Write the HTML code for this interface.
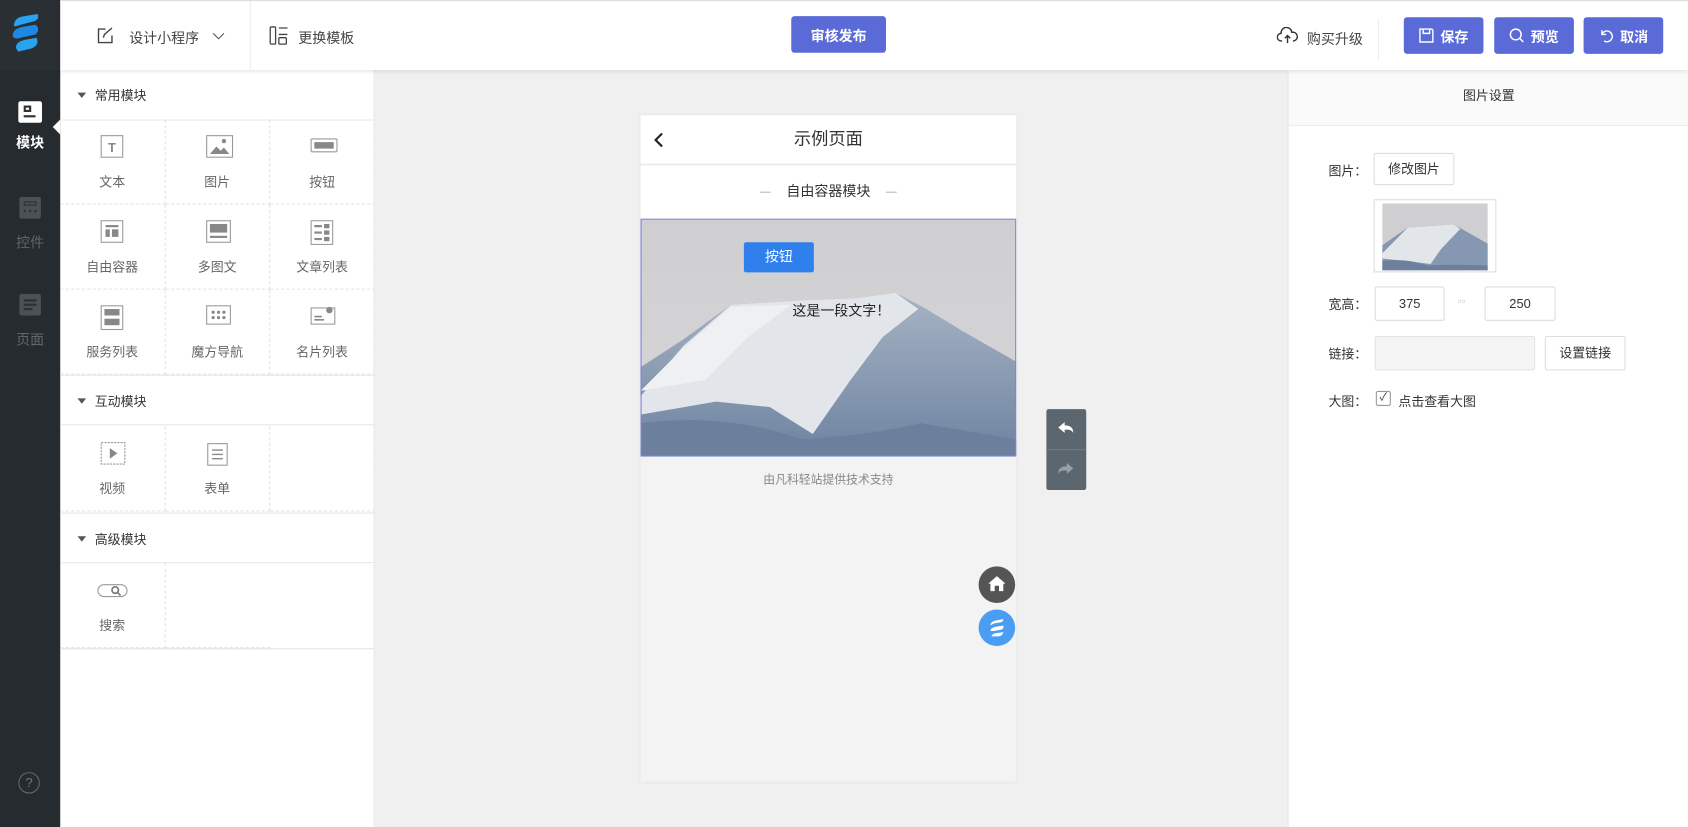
<!DOCTYPE html>
<html><head><meta charset="utf-8"><style>
*{margin:0;padding:0;box-sizing:border-box}
html,body{width:1688px;height:827px;overflow:hidden;background:#fff}
body{font-family:"Liberation Sans","Noto Sans CJK SC",sans-serif;font-size:12px;color:#333}
#w{position:absolute;left:0;top:0;width:1568px;height:768px;transform:scale(1.07653,1.0768);transform-origin:0 0}
.a{position:absolute}
.side{left:0;top:0;width:56px;height:768px;background:#2a2f34}
.nav{width:56px;text-align:center;color:#5f666c;font-size:13px}
.top{left:56px;top:0;width:1512px;height:65px;background:#fff;box-shadow:0 1px 4px rgba(0,0,0,.12);z-index:2;border-top:1px solid #ddd}
.btn{background:#5a6bd8;color:#fff;border-radius:3px;font-size:13px;font-weight:bold;display:flex;align-items:center;justify-content:center;gap:6px}
.lp{left:56px;top:65px;width:292px;height:703px;background:#fff}
.sh{position:absolute;left:0;width:292px;height:47px;border-bottom:1px solid #e8e8e8;font-size:12px;color:#333;padding:15px 0 0 32px}
.sh:before{content:"";position:absolute;left:16px;top:21px;border:4px solid transparent;border-top:5px solid #555}
.cell{position:absolute;width:97.5px;height:79px;border-right:1px dashed #e3e3e3;border-bottom:1px dashed #e3e3e3;text-align:center;color:#666;font-size:12px}
.cell svg{position:absolute;left:37px;top:14px}
.cell span{position:absolute;left:0;right:0;top:49px}
.cv{left:348px;top:65px;width:848px;height:703px;background:#f0f0f0}
.rp{left:1196px;top:65px;width:372px;height:703px;background:#fff;border-left:1px solid #e5e5e5}
.lab{font-size:12px;color:#333}
.inp{border:1px solid #ddd;border-radius:2px;background:#fff;text-align:center;font-size:12px}
</style></head><body><div id="w">
<div class="a side">
 <svg class="a" style="left:9px;top:12px" width="30" height="38" viewBox="0 0 30 38"><path d="M4 12 Q4 4 14 3 L26 1 Q28 6 22 8 L10 11 Q5 13 4 12Z" fill="#29a3f0"/><path d="M3 22 Q2 15 12 13 L24 11 Q29 15 24 20 L10 23 Q6 25 3 22Z" fill="#1e88e5"/><path d="M6 33 Q5 27 14 25 L25 23 Q28 30 20 33 L8 36Z" fill="#29a3f0"/></svg>
 <div class="a" style="left:0;top:65px;width:56px;height:703px;background:#262b30"></div>
 <div class="a nav" style="top:94px;color:#fff"><div style="width:22px;height:20px;background:#fff;border-radius:2px;margin:0 auto 8px;position:relative"><div style="position:absolute;left:5px;top:4px;width:7px;height:6px;border:2px solid #333"></div><div style="position:absolute;left:5px;top:13px;width:11px;height:2px;background:#333"></div></div><b>模块</b></div>
 <div class="a" style="left:49px;top:111px;border:7px solid transparent;border-right:7px solid #fff;border-left:0"></div>
 <div class="a nav" style="top:183px"><div style="width:20px;height:20px;background:#4a5157;border-radius:2px;margin:0 auto 12px;position:relative"><div style="position:absolute;left:4px;top:4px;width:12px;height:4px;border:1px solid #2b3035"></div><div style="position:absolute;left:4px;top:12px;width:12px;height:2px;border-left:2px dotted #2b3035;border-right:2px solid #2b3035;background:linear-gradient(90deg,transparent 40%,#2b3035 40%,#2b3035 60%,transparent 60%)"></div></div>控件</div>
 <div class="a nav" style="top:273px"><div style="width:20px;height:20px;background:#4a5157;border-radius:2px;margin:0 auto 12px;position:relative"><div style="position:absolute;left:4px;top:5px;width:12px;height:2px;background:#2b3035"></div><div style="position:absolute;left:4px;top:9px;width:12px;height:2px;background:#2b3035"></div><div style="position:absolute;left:4px;top:13px;width:8px;height:2px;background:#2b3035"></div></div>页面</div>
 <div class="a" style="left:17px;top:717px;width:20px;height:20px;border:1px solid #666;border-radius:50%;color:#777;text-align:center;line-height:18px">?</div>
</div>
<div class="a top">
 <svg class="a" style="left:34px;top:24px" width="16" height="16" viewBox="0 0 16 16" fill="none" stroke="#444" stroke-width="1.3"><path d="M14 8v6.5H1.5V2H8M6 10l1-3 7-6"/></svg>
 <div class="a" style="left:64px;top:24px;font-size:13px;color:#444">设计小程序</div>
 <svg class="a" style="left:141px;top:29px" width="12" height="8"><path d="M1 1l5 5 5-5" stroke="#555" fill="none"/></svg>
 <div class="a" style="left:176px;top:0;width:1px;height:64px;background:#eee"></div>
 <svg class="a" style="left:194px;top:23px" width="18" height="18" fill="none" stroke="#444" stroke-width="1.2"><rect x="1" y="1" width="5" height="16" rx="1"/><path d="M9 2h8M9 8h8"/><rect x="9" y="11" width="7" height="6" rx="1"/></svg>
 <div class="a" style="left:221px;top:24px;font-size:13px;color:#444">更换模板</div>
 <div class="a btn" style="left:679px;top:14px;width:88px;height:34px">审核发布</div>
 <svg class="a" style="left:1130px;top:24px" width="20" height="16" fill="none" stroke="#333" stroke-width="1.3"><path d="M5 13H4a3.5 3.5 0 0 1 0-7 5 5 0 0 1 10-1 3.5 3.5 0 0 1 2 8h-1"/><path d="M10 15V8M7.5 10.5 10 8l2.5 2.5"/></svg>
 <div class="a" style="left:1158px;top:25px;font-size:13px;color:#444">购买升级</div>
 <div class="a" style="left:1224px;top:16px;width:1px;height:40px;background:#eee"></div>
 <div class="a btn" style="left:1248px;top:15px;width:74px;height:34px"><svg width="14" height="14" fill="none" stroke="#fff" stroke-width="1.3"><path d="M1 1h11l1 1v11H1z"/><path d="M4 1v4h6V1"/></svg>保存</div>
 <div class="a btn" style="left:1332px;top:15px;width:74px;height:34px"><svg width="14" height="14" fill="none" stroke="#fff" stroke-width="1.4"><circle cx="6" cy="6" r="5"/><path d="M10 10l3 3"/></svg>预览</div>
 <div class="a btn" style="left:1415px;top:15px;width:74px;height:34px"><svg width="14" height="14" fill="none" stroke="#fff" stroke-width="1.3"><path d="M3 2v4h4M3 6a5 5 0 1 1 2 6"/></svg>取消</div>
</div>
<div class="a lp">
 <div class="sh" style="top:0">常用模块</div>
 <div class="cell" style="left:0;top:46px"><svg width="22" height="22"><rect x="1" y="1" width="20" height="20" fill="none" stroke="#999"/><text x="11" y="16" text-anchor="middle" font-size="12" font-weight="bold" fill="#888" font-family="Liberation Sans">T</text></svg><span>文本</span></div>
 <div class="cell" style="left:97.5px;top:46px"><svg width="26" height="22"><rect x="1" y="1" width="24" height="20" fill="none" stroke="#999"/><path d="M4 18l6-7 4 4 3-3 5 6z" fill="#888"/><circle cx="17" cy="6" r="2" fill="#888"/></svg><span>图片</span></div>
 <div class="cell" style="left:195px;top:46px"><svg width="26" height="16" style="top:17px"><rect x="1" y="1" width="24" height="12" rx="1" fill="none" stroke="#999"/><rect x="4" y="4" width="18" height="6" fill="#888"/></svg><span>按钮</span></div>
 <div class="cell" style="left:0;top:125px"><svg width="22" height="22"><rect x="1" y="1" width="20" height="20" fill="none" stroke="#999"/><rect x="5" y="5" width="12" height="2" fill="#888"/><rect x="5" y="9" width="4" height="7" fill="#888"/><rect x="11" y="9" width="6" height="7" fill="#888"/></svg><span>自由容器</span></div>
 <div class="cell" style="left:97.5px;top:125px"><svg width="24" height="22"><rect x="1" y="1" width="22" height="20" fill="none" stroke="#999"/><rect x="4" y="4" width="16" height="8" fill="#888"/><rect x="4" y="15" width="16" height="2" fill="#888"/></svg><span>多图文</span></div>
 <div class="cell" style="left:195px;top:125px"><svg width="22" height="24"><rect x="1" y="1" width="20" height="22" fill="none" stroke="#999"/><path d="M4 6h7M4 12h7M4 18h7" stroke="#888" stroke-width="2"/><rect x="13" y="4" width="5" height="4" fill="#888"/><rect x="13" y="10" width="5" height="4" fill="#888"/><rect x="13" y="16" width="5" height="4" fill="#888"/></svg><span>文章列表</span></div>
 <div class="cell" style="left:0;top:204px"><svg width="22" height="24"><rect x="1" y="1" width="20" height="22" fill="none" stroke="#999"/><rect x="4" y="4" width="14" height="6" fill="#888"/><rect x="4" y="13" width="14" height="6" fill="#888"/></svg><span>服务列表</span></div>
 <div class="cell" style="left:97.5px;top:204px"><svg width="24" height="20"><rect x="1" y="1" width="22" height="17" fill="none" stroke="#999"/><g fill="#888"><circle cx="7" cy="7" r="1.5"/><circle cx="12" cy="7" r="1.5"/><circle cx="17" cy="7" r="1.5"/><circle cx="7" cy="12" r="1.5"/><circle cx="12" cy="12" r="1.5"/><circle cx="17" cy="12" r="1.5"/></g></svg><span>魔方导航</span></div>
 <div class="cell" style="left:195px;top:204px"><svg width="24" height="20"><rect x="1" y="3" width="22" height="15" fill="none" stroke="#999"/><circle cx="18" cy="5" r="3" fill="#888"/><path d="M4 11h7M4 14h9" stroke="#888" stroke-width="1.5"/></svg><span>名片列表</span></div>
 <div class="sh" style="top:283px;border-top:1px solid #e8e8e8">互动模块</div>
 <div class="cell" style="left:0;top:331px"><svg width="24" height="22"><rect x="1" y="1" width="22" height="20" fill="none" stroke="#999" stroke-dasharray="2 1"/><path d="M9 6l7 5-7 5z" fill="#888"/></svg><span>视频</span></div>
 <div class="cell" style="left:97.5px;top:331px"><svg width="22" height="24"><rect x="2" y="2" width="18" height="20" fill="none" stroke="#999"/><path d="M6 8h10M6 12h10M6 16h10" stroke="#888" stroke-width="1.3"/></svg><span>表单</span></div>
 <div class="cell" style="left:195px;top:331px"></div>
 <div class="sh" style="top:411px;border-top:1px solid #e8e8e8">高级模块</div>
 <div class="cell" style="left:0;top:458px"><svg width="30" height="16" style="left:34px;top:18px"><rect x="1" y="2" width="27" height="11" rx="5.5" fill="none" stroke="#999"/><circle cx="17" cy="7" r="3" fill="none" stroke="#777" stroke-width="1.5"/><path d="M19 9l3 3" stroke="#777" stroke-width="1.5"/></svg><span>搜索</span></div>
 <div class="cell" style="left:97.5px;top:458px;border-right:0"></div>
 <div class="a" style="left:0;top:537px;width:292px;height:1px;background:#e3e3e3"></div>
 <div class="a" style="left:291px;top:0;width:1px;height:703px;background:#e8e8e8"></div>
</div>
<div class="a cv">
 <div class="a" style="left:247px;top:42px;width:349px;height:619px;background:#f3f3f3;box-shadow:0 0 3px rgba(0,0,0,.08)">
  <div class="a" style="left:0;top:0;width:349px;height:46px;background:#fff;border-bottom:1px solid #e5e5e5;text-align:center;line-height:46px;font-size:16px;color:#333">示例页面</div>
  <svg class="a" style="left:12px;top:15px" width="10" height="16"><path d="M8 2L2 8l6 6" stroke="#222" stroke-width="2" fill="none"/></svg>
  <div class="a" style="left:0;top:47px;width:349px;height:49px;background:#fff;text-align:center;line-height:48px;font-size:13px;color:#333"><span style="display:inline-block;width:10px;height:1px;background:#bbb;vertical-align:middle;margin-right:14px"></span>自由容器模块<span style="display:inline-block;width:10px;height:1px;background:#bbb;vertical-align:middle;margin-left:14px"></span></div>
  <svg class="a" style="left:0;top:96px" width="349" height="221" viewBox="0 0 349 221">
   <defs><linearGradient id="sk" x1="0" y1="0" x2="0" y2="1"><stop offset="0" stop-color="#cfcfd1"/><stop offset="1" stop-color="#d6d6d8"/></linearGradient><linearGradient id="rf" x1="0" y1="0" x2="0" y2="1"><stop offset="0" stop-color="#a7b3c4"/><stop offset="1" stop-color="#6e83a1"/></linearGradient></defs>
   <rect width="349" height="221" fill="url(#sk)"/>
   <path d="M0 138 L40 112 L84 80 L150 76 L200 74 L237 69 L262 82 L300 105 L349 133 V221 H0Z" fill="url(#rf)"/>
   <path d="M0 165 L40 118 L84 80 L150 76 L200 74 L237 69 L258 84 L225 110 L195 150 L160 200 L120 175 L70 170 L0 182Z" fill="#e2e5ea"/>
   <path d="M0 160 L40 120 L84 82 L140 80 L100 110 L60 150Z" fill="#eef0f2"/>
   <path d="M0 190 Q80 180 150 205 Q220 200 260 190 L349 205 V221 H0Z" fill="#6c809e"/>
   <rect x=".5" y=".5" width="348" height="220" fill="none" stroke="#7b83e0"/>
  </svg>
  <div class="a" style="left:96px;top:118px;width:65px;height:28px;background:#2f80ed;color:#fff;text-align:center;line-height:28px;font-size:13px;border-radius:2px">按钮</div>
  <div class="a" style="left:141px;top:171px;font-size:13px;color:#222">这是一段文字！</div>
  <div class="a" style="left:0;top:330px;width:349px;text-align:center;font-size:11px;color:#888">由凡科轻站提供技术支持</div>
 </div>
 <div class="a" style="left:624px;top:315px;width:37px;height:75px;background:#5b666e;border-radius:2px"><div style="height:1px;background:#777;margin-top:37px"></div></div>
 <svg class="a" style="left:633px;top:325px" width="18" height="14"><path d="M2 7l6-5v3c5 0 8 2 8 7-2-3-4-3-8-3v3z" fill="#fff"/></svg>
 <svg class="a" style="left:633px;top:363px" width="18" height="14"><path d="M16 7l-6-5v3c-5 0-8 2-8 7 2-3 4-3 8-3v3z" fill="#95a0a8"/></svg>
 <div class="a" style="left:561px;top:461px;width:34px;height:34px;border-radius:50%;background:#555"><svg width="34" height="34"><path d="M17 9l-8 7h2v7h4v-5h4v5h4v-7h2z" fill="#fff"/></svg></div>
 <div class="a" style="left:561px;top:501px;width:34px;height:34px;border-radius:50%;background:#4a9df3"><svg width="34" height="34"><path d="M11 15q0-4 6-5l6-1q0 3-3 3l-6 1q-2 1-3 2zM11 20q0-3 5-4l7-1q1 3-3 4l-6 1zM12 25q1-3 5-3l6-1q-1 4-5 4z" fill="#fff"/></svg></div>
</div>
<div class="a rp">
 <div class="a" style="left:0;top:0;width:372px;height:52px;background:#fafafa;border-bottom:1px solid #eee;text-align:center;line-height:48px;font-size:12px">图片设置</div>
 <div class="a lab" style="left:37px;top:85px">图片：</div>
 <div class="a inp" style="left:79px;top:77px;width:75px;height:30px;line-height:28px">修改图片</div>
 <div class="a" style="left:79px;top:120px;width:114px;height:68px;border:1px solid #ddd;background:#fff;padding:2px 7px"><svg width="98" height="64" viewBox="0 0 349 221"><rect width="349" height="221" fill="#cfcfd1"/><path d="M0 138 L84 80 L237 69 L349 133 V221 H0Z" fill="#8597b1"/><path d="M0 165 L84 80 L237 69 L258 84 L195 150 L160 200 L0 182Z" fill="#e2e5ea"/><path d="M0 190 Q80 180 150 205 Q220 200 349 205 V221 H0Z" fill="#6c809e"/></svg></div>
 <div class="a lab" style="left:37px;top:209px">宽高：</div>
 <div class="a inp" style="left:80px;top:201px;width:65px;height:32px;line-height:30px">375</div>
 <div class="a" style="left:157px;top:210px;color:#ccc;font-size:10px">▫▫</div>
 <div class="a inp" style="left:182px;top:201px;width:66px;height:32px;line-height:30px">250</div>
 <div class="a lab" style="left:37px;top:255px">链接：</div>
 <div class="a" style="left:80px;top:247px;width:149px;height:32px;background:#f5f5f5;border:1px solid #e2e2e2;border-radius:2px"></div>
 <div class="a inp" style="left:238px;top:247px;width:75px;height:32px;line-height:30px">设置链接</div>
 <div class="a lab" style="left:37px;top:299px">大图：</div>
 <div class="a" style="left:81px;top:298px;width:14px;height:14px;border:1px solid #999;border-radius:2px;font-size:10px;line-height:12px;text-align:center">✓</div>
 <div class="a lab" style="left:102px;top:299px">点击查看大图</div>
</div>
</div></body></html>
